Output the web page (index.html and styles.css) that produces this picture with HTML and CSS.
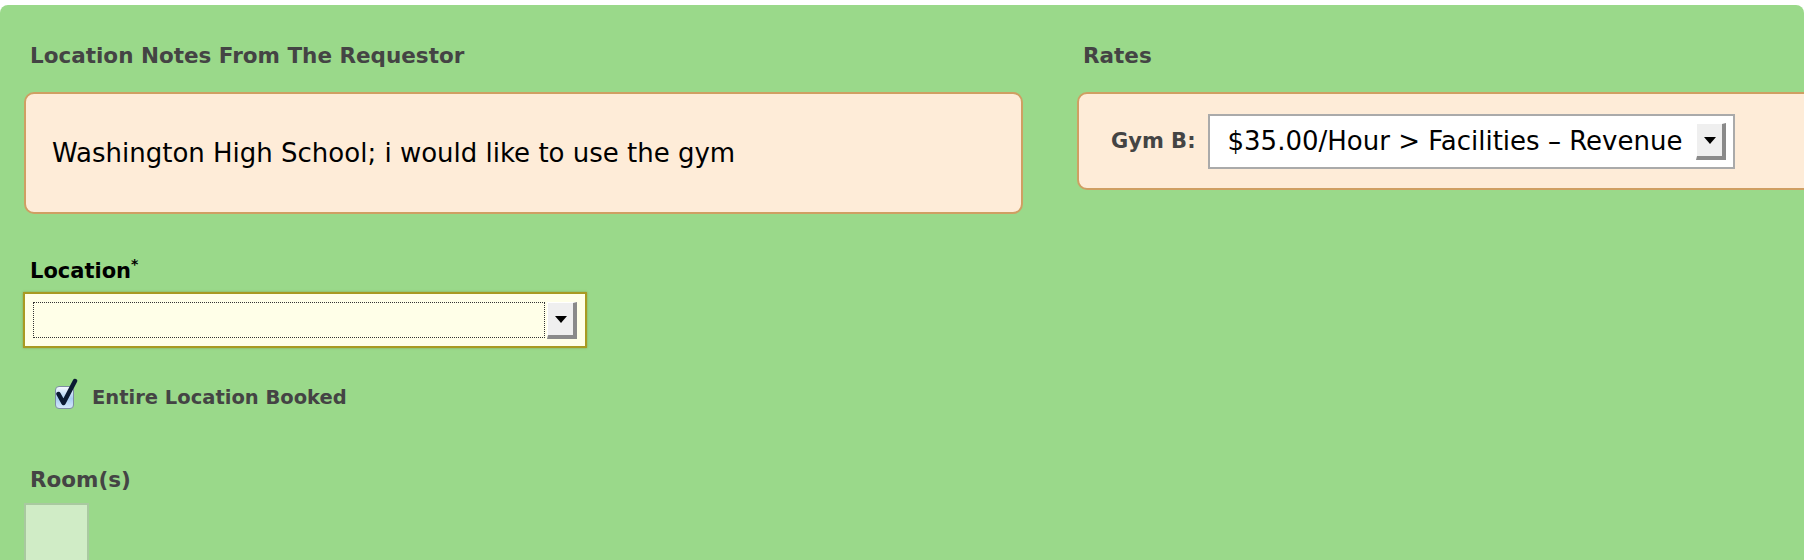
FILE: index.html
```html
<!DOCTYPE html>
<html lang="en">
<head>
  <meta charset="UTF-8">
  <title>Location</title>
  <link rel="stylesheet" href="styles.css">
</head>
<body>
  <div class="panel">
    <div class="col-left">
      <h3 class="section-title">Location Notes From The Requestor</h3>
      <div class="note-box">Washington High School; i would like to use the gym</div>

      <label class="field-label">Location<sup>*</sup></label>
      <div class="select select-location">
        <span class="select-focus"></span>
        <span class="select-arrow"></span>
      </div>

      <label class="check-row">
        <span class="checkbox">
          <svg width="24" height="32" viewBox="0 0 24 32"><path d="M3.5 16 L8.5 25 L20 3" fill="none" stroke="#0b1a33" stroke-width="4.5" stroke-linecap="round" stroke-linejoin="round"/></svg>
        </span>
        Entire Location Booked
      </label>

      <h3 class="section-title rooms-title">Room(s)</h3>
      <div class="room-list"></div>
    </div>

    <div class="col-right">
      <h3 class="section-title">Rates</h3>
      <div class="rate-box">
        <span class="rate-label">Gym B:</span>
        <div class="select select-rate">
          <span class="select-text">$35.00/Hour &gt; Facilities – Revenue</span>
          <span class="select-arrow"></span>
        </div>
      </div>
    </div>
  </div>
</body>
</html>
```

FILE: styles.css
```css
body {
  margin: 0;
  padding: 0;
  background-color: #fff;
  font-family: "DejaVu Sans", Verdana, sans-serif;
  overflow: hidden;
}

.panel {
  margin-top: 5px;
  height: 600px;
  background-color: #9ad98a;
  border-radius: 8px 8px 0 0;
  display: flex;
  padding-left: 24px;
  gap: 54px;
  overflow: hidden;
}

.col-left {
  width: 999px;
  flex-shrink: 0;
}

.col-right {
  width: 800px;
  flex-shrink: 0;
}

.section-title {
  margin: 0;
  padding: 39px 0 0 6px;
  font-size: 21.5px;
  line-height: 24px;
  font-weight: bold;
  color: #444;
}

.rooms-title {
  padding-top: 59px;
}

.note-box {
  margin-top: 24px;
  height: 118px;
  border: 2px solid #cf9f63;
  border-radius: 10px;
  background-color: #feecd8;
  padding: 0 26px;
  display: flex;
  align-items: center;
  font-size: 26px;
  color: #000;
}

.field-label {
  display: block;
  margin: 45px 0 0 6px;
  font-size: 21px;
  line-height: 24px;
  font-weight: bold;
  color: #000;
}

.field-label sup {
  font-size: 14px;
  vertical-align: 9px;
  line-height: 0;
}

.select {
  box-sizing: border-box;
  display: flex;
  align-items: center;
}

.select-location {
  margin: 9px 0 0 -1px;
  width: 564px;
  height: 56px;
  border: 2px solid #a89a22;
  background-color: #ffffe8;
  padding: 0 8px;
  box-shadow: 0 0 2px rgba(120, 110, 20, 0.5);
}

.select-focus {
  flex: 1;
  height: 34px;
  border: 1px dotted #333;
  margin-right: 2px;
}

.select-arrow {
  position: relative;
  box-sizing: border-box;
  width: 30px;
  height: 37px;
  background-color: #efefef;
  border-top: 1px solid #fff;
  border-left: 1px solid #fff;
  border-right: 4px solid #8a8a8a;
  border-bottom: 4px solid #8a8a8a;
  flex-shrink: 0;
}

.select-arrow::after {
  content: "";
  position: absolute;
  left: 7px;
  top: 13px;
  border-left: 6px solid transparent;
  border-right: 6px solid transparent;
  border-top: 7px solid #000;
}

.check-row {
  display: flex;
  align-items: center;
  margin: 38px 0 0 31px;
  font-size: 19.5px;
  font-weight: bold;
  color: #444;
}

.checkbox {
  position: relative;
  width: 17px;
  height: 21px;
  margin-right: 18px;
  border: 1px solid #7d8ea3;
  border-radius: 4px;
  background: linear-gradient(#f4f9ff, #a9cdf2 55%, #d4e8fb);
  flex-shrink: 0;
}

.checkbox svg {
  position: absolute;
  left: -1px;
  top: -9px;
}

.room-list {
  margin-top: 11px;
  width: 61px;
  height: 80px;
  border: 2px solid #a9c9a0;
  background-color: #d0ecc6;
}

.rate-box {
  margin-top: 24px;
  height: 94px;
  border: 2px solid #cf9f63;
  border-radius: 10px;
  background-color: #feecd8;
  display: flex;
  align-items: center;
  padding-left: 32px;
}

.rate-label {
  font-size: 21px;
  font-weight: bold;
  color: #444;
  margin-right: 12px;
}

.select-rate {
  width: 527px;
  height: 55px;
  border: 2px solid #aaa;
  background-color: #fff;
  padding: 0 7px 0 18px;
}

.select-text {
  flex: 1;
  font-size: 26px;
  color: #000;
  white-space: nowrap;
}
```
